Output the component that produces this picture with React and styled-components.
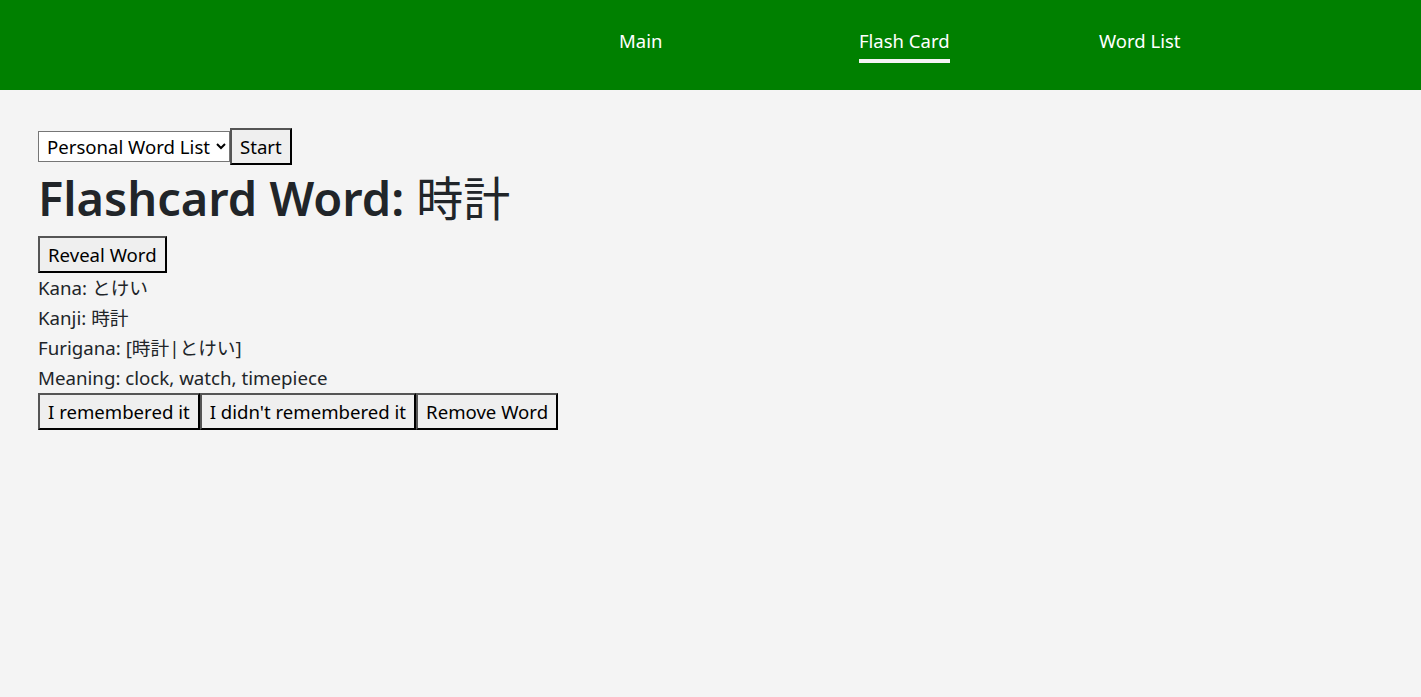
import React, { useState } from "react";
import styled, { createGlobalStyle } from "styled-components";

const GlobalStyle = createGlobalStyle`
	body {
		margin: 0;
		background: #f4f4f4;
		font-family: "Noto Sans", "Noto Sans CJK JP", sans-serif;
		color: #212529;
	}
`;

const Nav = styled.nav`
	height: 90px;
	background: #008000;
	display: flex;
	align-items: flex-start;
	padding-left: 619px;
	box-sizing: border-box;
`;

const NavItem = styled.a`
	width: 240px;
	display: flex;
	padding-top: 29px;
	font-size: 18.5px;
	color: #fff;
	text-decoration: none;

	span {
		line-height: 24px;
		padding-bottom: 6px;
		border-bottom: 4px solid ${(p) => (p.$active ? "#f4f4f4" : "transparent")};
	}
`;

const Content = styled.main`
	padding: 38px 38px;
`;

const Controls = styled.div`
	display: flex;
	align-items: center;
`;

const Select = styled.select`
	font-family: inherit;
	font-size: 18.6px;
	height: 31px;
	padding: 0 2px 0 4px;
	border: 1px solid #767676;
	border-radius: 0;
	background: #fff;
	color: #000;
`;

const Button = styled.button`
	font-family: inherit;
	font-size: 18.6px;
	color: #000;
	background: #efefef;
	border: 2px outset #767676;
	border-color: #555 #000 #000 #555;
	padding: 1px 8px;
	line-height: 31px;
	cursor: pointer;
`;

const Heading = styled.h1`
	font-size: 47px;
	font-weight: 600;
	margin: 5px 0 10px;
	line-height: 1.2;

	span {
		font-weight: 400;
	}
`;

const Line = styled.p`
	margin: 0;
	font-size: 18.7px;
	line-height: 30px;
`;

const Actions = styled.div`
	display: flex;
`;

const word = {
	kana: "とけい",
	kanji: "時計",
	furigana: "[時計|とけい]",
	meaning: "clock, watch, timepiece",
};

const App = () => {
	const [shown, setShown] = useState(true);

	return (
		<>
			<GlobalStyle />
			<Nav>
				<NavItem href="#">
					<span>Main</span>
				</NavItem>
				<NavItem href="#" $active>
					<span>Flash Card</span>
				</NavItem>
				<NavItem href="#">
					<span>Word List</span>
				</NavItem>
			</Nav>
			<Content>
				<Controls>
					<Select defaultValue="personal">
						<option value="personal">Personal Word List</option>
					</Select>
					<Button>Start</Button>
				</Controls>
				<Heading>
					Flashcard Word: <span>{word.kanji}</span>
				</Heading>
				<Button onClick={() => setShown(!shown)}>Reveal Word</Button>
				{shown && (
					<>
						<Line>Kana: {word.kana}</Line>
						<Line>Kanji: {word.kanji}</Line>
						<Line>Furigana: {word.furigana}</Line>
						<Line>Meaning: {word.meaning}</Line>
					</>
				)}
				<Actions>
					<Button>I remembered it</Button>
					<Button>I didn't remembered it</Button>
					<Button>Remove Word</Button>
				</Actions>
			</Content>
		</>
	);
};

export default App;
